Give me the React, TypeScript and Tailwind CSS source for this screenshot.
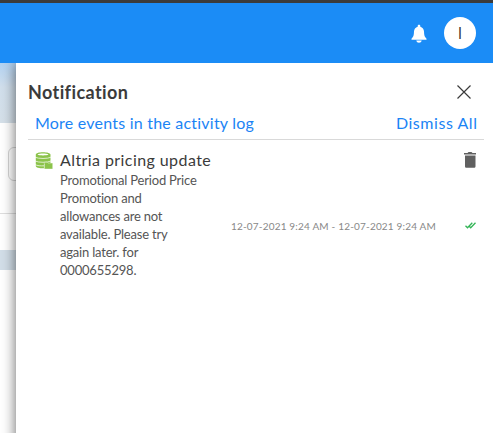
const descriptionLines = [
  "Promotional Period Price",
  "Promotion and",
  "allowances are not",
  "available. Please try",
  "again later. for",
  "0000655298."
];

const BellIcon = () => (
  <svg width="16" height="20" viewBox="0 0 16 20" fill="currentColor">
    <path d="M8 .8c.9 0 1.300.5 1.300 1.300v.6c2.300.6 3.600 2.500 3.700 4.900.1 3.900.6 5.500 2.500 7.100v1H.5v-1c1.900-1.600 2.400-3.200 2.500-7.100.1-2.400 1.400-4.300 3.700-4.900v-.6c0-.8.4-1.300 1.300-1.300z" />
    <path d="M5.300 16.600h5.400c-.3 1.500-1.300 2.200-2.700 2.200s-2.400-.7-2.700-2.200z" />
  </svg>
);

const CloseIcon = () => (
  <svg width="14" height="14" viewBox="0 0 14 14" fill="none" stroke="currentColor" strokeWidth="1.200">
    <path d="M.5.5l13 13M13.500.5l-13 13" />
  </svg>
);

const DatabaseIcon = () => (
  <svg width="18" height="18" viewBox="0 0 18 18">
    <path
      fill="#8bc34a"
      d="M8 .3c4.200 0 7.500.9 7.500 2.400v9.300H9v4.300C4 16.300.8 15.500.8 14V2.700C.8 1.200 3.800.3 8 .3z"
    />
    <path fill="#fff" d="M2.500 2.500C4.500 1.200 11.500 1.200 13.500 2.500 11.500 3.700 4.500 3.700 2.500 2.500z" />
    <path fill="none" stroke="#fff" strokeWidth=".7" d="M0 5.200c3.500 1.700 12.500 1.700 16 0M0 9c3.500 1.700 12.500 1.700 16 0M0 12.600c2.500 1.200 5.500 1.400 9 1.200" />
    <path fill="#8bc34a" stroke="#fff" strokeWidth=".4" d="M9.300 10.300h3l.7.800h4.700v5.900H9.300z" />
  </svg>
);

const TrashIcon = () => (
  <svg width="12" height="16" viewBox="0 0 12 16" fill="currentColor">
    <path d="M0 1h3.500l1-1h3l1 1H12v1.500H0zM1 3.500h10.500v10.700c0 1-.6 1.600-1.600 1.600H2.600c-1 0-1.600-.6-1.600-1.600z" />
  </svg>
);

const DoubleCheckIcon = () => (
  <svg width="11" height="7" viewBox="0 0 11 7" fill="none" stroke="#35b558" strokeWidth="1.300">
    <path d="M.5 3.800l2 2L7.300.7M4.200 4.300l1.500 1.500L10.500.7" />
  </svg>
);

const App = () => {
  return (
    <div className="flex h-[433px] w-[493px] flex-col overflow-hidden bg-white font-[Lato,sans-serif]">
      <header className="flex h-[63px] shrink-0 items-center justify-end gap-[17px] border-t-[3px] border-[#3b3b3b] bg-[#1b8cf6] pr-[17px] text-white">
        <div className="pt-0.5">
          <BellIcon />
        </div>
        <div className="flex size-8 items-center justify-center rounded-full bg-white pb-px font-[Open_Sans,sans-serif] text-base text-[#333]">
          I
        </div>
      </header>

      <div className="flex min-h-0 flex-1">
        <div className="w-4 shrink-0 overflow-hidden">
          <div className="h-[60px] bg-linear-to-b from-[#b3d3f2] via-[#d1dfec] via-40% to-[#d5e0e9]" />
          <div className="h-[91px] border-b border-[#dedede] pl-2 pt-6">
            <div className="h-[34px] w-20 rounded-md border border-[#d4d4d4]" />
          </div>
          <div className="h-9" />
          <div className="h-5 bg-[#d2dee8]" />
        </div>

        <aside className="relative -mb-5 flex-1 bg-white pl-3 pr-[9px] pt-[17px] shadow-[0_0_13px_rgba(0,0,0,0.6)] [clip-path:inset(0_0_0_-16px)]">
          <div className="flex h-6 items-center justify-between pr-[13px] text-[#3b3b3b]">
            <h2 className="text-[18px] font-bold leading-[22px] tracking-[0.4px]">Notification</h2>
            <CloseIcon />
          </div>

          <div className="mt-1.5 flex h-[30px] justify-between border-b border-[#d9d9d9] pl-[7px] pr-[7px] text-base leading-[26px] text-[#1b84f5]">
            <a className="tracking-[0.22px]">More events in the activity log</a>
            <a className="-mr-[0.5px] tracking-[0.55px]">Dismiss All</a>
          </div>

          <div className="flex h-[31px] items-start justify-between pl-[7px] pr-2 pt-3 text-[#606060]">
            <div className="flex">
              <DatabaseIcon />
              <h3 className="ml-[7px] text-base leading-4 tracking-[0.42px] text-[#3b3b3b]">
                Altria pricing update
              </h3>
            </div>
            <TrashIcon />
          </div>

          <div className="flex items-center pl-8 pr-2">
            <p className="w-[171px] shrink-0 text-[13px] leading-[18px] tracking-[-0.2px] text-[#555]">
              {descriptionLines.map((line) => (
                <span key={line} className="block whitespace-nowrap">{line}</span>
              ))}
            </p>
            <time className="whitespace-nowrap pt-0.5 text-[10px] leading-4 tracking-[0.18px] text-[#888]">
              12-07-2021 9:24 AM - 12-07-2021 9:24 AM
            </time>
            <span className="ml-auto">
              <DoubleCheckIcon />
            </span>
          </div>
        </aside>
      </div>
    </div>
  );
};

export default App;
